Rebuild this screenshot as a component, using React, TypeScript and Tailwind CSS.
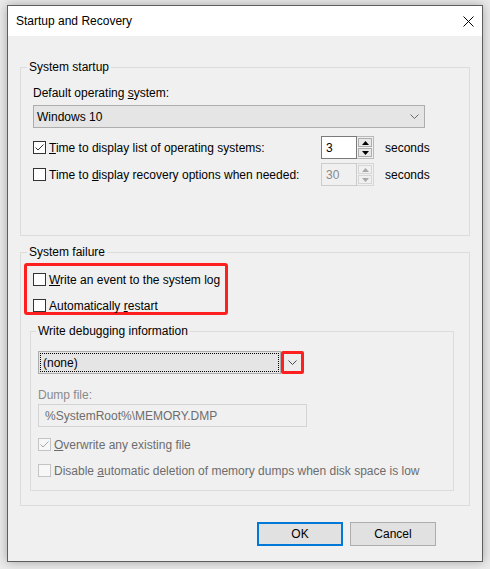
import React from "react";

const font = { fontFamily: '"Liberation Sans", Arial, sans-serif' };

function CheckBox({ checked = false, disabled = false }: { checked?: boolean; disabled?: boolean }) {
  return (
    <span
      className={`flex h-[13px] w-[13px] shrink-0 items-center justify-center border ${
        disabled ? "border-[#c4c4c4] bg-[#f7f7f7]" : "border-[#333333] bg-white"
      }`}
    >
      {checked && (
        <svg width="11" height="11" viewBox="0 0 11 11">
          <path d="M1.5 5.5 L4 8 L9.5 2.5" fill="none" stroke={disabled ? "#a8a8a8" : "#333333"} strokeWidth="1" />
        </svg>
      )}
    </span>
  );
}

function Chevron({ color = "#5a5a5a" }: { color?: string }) {
  return (
    <svg width="9" height="5" viewBox="0 0 9 5">
      <path d="M0.5 0.5 L4.5 4.5 L8.5 0.5" fill="none" stroke={color} strokeWidth="1" />
    </svg>
  );
}

function Spinner({ value, disabled = false }: { value: string; disabled?: boolean }) {
  const tri = disabled ? "#a8a8a8" : "#000000";
  return (
    <div className="flex h-[23px]">
      <div
        className={`flex w-[36px] items-center border pl-[4px] ${
          disabled ? "border-[#cccccc] bg-[#f0f0f0] text-[#8a8a8a]" : "border-[#7a7a7a] bg-white text-black"
        }`}
      >
        {value}
      </div>
      <div
        className={`flex w-[17px] flex-col gap-[1px] border border-l-0 p-[1px] ${
          disabled ? "border-[#d6d6d6]" : "border-[#b9b9b9]"
        }`}
      >
        <div
          className={`flex flex-1 items-center justify-center border ${
            disabled ? "border-[#d6d6d6] bg-[#f0f0f0]" : "border-[#adadad] bg-[#e8e8e8]"
          }`}
        >
          <svg width="7" height="4" viewBox="0 0 7 4">
            <path d="M0 4 L3.5 0 L7 4 Z" fill={tri} />
          </svg>
        </div>
        <div
          className={`flex flex-1 items-center justify-center border ${
            disabled ? "border-[#d6d6d6] bg-[#f0f0f0]" : "border-[#adadad] bg-[#e8e8e8]"
          }`}
        >
          <svg width="7" height="4" viewBox="0 0 7 4">
            <path d="M0 0 L7 0 L3.5 4 Z" fill={tri} />
          </svg>
        </div>
      </div>
    </div>
  );
}

export default function App() {
  return (
    <div className="h-[569px] w-[490px] bg-[#ebebeb] pl-[7px] pt-[5px] text-[12px] text-black" style={font}>
      <div className="flex h-[557px] w-[476px] flex-col border border-[#5e5e5e] bg-[#f0f0f0] shadow-[0_0_10px_rgba(0,0,0,0.3)]">
        {/* title bar */}
        <div className="flex h-[30px] shrink-0 items-center justify-between bg-white pl-[8px] pr-[8px]">
          <span className="leading-4">Startup and Recovery</span>
          <svg width="11" height="11" viewBox="0 0 11 11">
            <path d="M0.5 0.5 L10.5 10.5 M10.5 0.5 L0.5 10.5" stroke="#000" strokeWidth="1" />
          </svg>
        </div>

        <div className="flex flex-1 flex-col px-[12px] pt-[23px]">
          {/* System startup */}
          <fieldset className="h-[177px] border border-[#dcdcdc] p-0">
            <legend className="ml-[6px] px-[2px] leading-4">System startup</legend>
            <div className="px-[12px]">
              <div className="mt-[10px] leading-4">
                Default operating <span className="underline">s</span>ystem:
              </div>
              <div className="mt-[4px] flex h-[23px] w-[392px] items-center justify-between border border-[#adadad] bg-[#e5e5e5] pl-[3px] pr-[5px]">
                <span>Windows 10</span>
                <Chevron color="#6a6a6a" />
              </div>

              <div className="mt-[8px] flex h-[23px] items-center">
                <div className="flex w-[288px] items-center gap-[3px]">
                  <CheckBox checked />
                  <span>
                    <span className="underline">T</span>ime to display list of operating systems:
                  </span>
                </div>
                <Spinner value="3" />
                <span className="ml-[11px]">seconds</span>
              </div>

              <div className="mt-[4px] flex h-[23px] items-center">
                <div className="flex w-[288px] items-center gap-[3px]">
                  <CheckBox />
                  <span>
                    Time to <span className="underline">d</span>isplay recovery options when needed:
                  </span>
                </div>
                <Spinner value="30" disabled />
                <span className="ml-[11px]">seconds</span>
              </div>
            </div>
          </fieldset>

          {/* System failure */}
          <fieldset className="mt-[8px] h-[262px] border border-[#dcdcdc] p-0">
            <legend className="ml-[6px] px-[2px] leading-4">System failure</legend>
            <div className="pl-[3px]">
              <div className="mt-[3px] flex w-[204px] flex-col gap-[13px] rounded-[3px] border-[3px] border-[#fe1f1f] pl-[6px] pt-[7px]">
                <div className="flex h-[13px] items-center gap-[3px]">
                  <CheckBox />
                  <span>
                    <span className="underline">W</span>rite an event to the system log
                  </span>
                </div>
                <div className="flex h-[13px] items-center gap-[3px]">
                  <CheckBox />
                  <span>
                    Automatically <span className="underline">r</span>estart
                  </span>
                </div>
              </div>

              <fieldset className="ml-[6px] mt-[8px] h-[168px] w-[424px] border border-[#dcdcdc] p-0">
                <legend className="ml-[5px] px-[2px] leading-4">Write debugging information</legend>
                <div className="pl-[7px]">
                  <div className="mt-[12px] flex h-[23px]">
                    <div className="w-[243px] border border-[#adadad] bg-[#e5e5e5] p-[1px]">
                      <div className="flex h-full items-center border border-dotted border-black pl-[2px]">
                        (none)
                      </div>
                    </div>
                    <div className="flex w-[23px] items-center justify-center rounded-[2px] border-[3px] border-[#fe1f1f] bg-[#ececec]">
                      <Chevron color="#4a4a4a" />
                    </div>
                  </div>

                  <div className="mt-[13px] h-[16px] leading-4 text-[#8a8a8a]">Dump file:</div>
                  <div className="mt-[1px] flex h-[23px] w-[269px] items-center border border-[#d4d4d4] bg-[#f0f0f0] pl-[6px] text-[#6d6d6d]">
                    %SystemRoot%\MEMORY.DMP
                  </div>

                  <div className="mt-[11px] flex h-[13px] items-center gap-[3px] text-[#6d6d6d]">
                    <CheckBox checked disabled />
                    <span>
                      <span className="underline">O</span>verwrite any existing file
                    </span>
                  </div>
                  <div className="mt-[13px] flex h-[13px] items-center gap-[3px] text-[#6d6d6d]">
                    <CheckBox disabled />
                    <span>
                      Disable <span className="underline">a</span>utomatic deletion of memory dumps when disk space is low
                    </span>
                  </div>
                </div>
              </fieldset>
            </div>
          </fieldset>

          {/* buttons */}
          <div className="mr-[34px] mt-[16px] flex justify-end gap-[7px]">
            <button className="h-[24px] w-[86px] border-2 border-[#0078d7] bg-[#e1e1e1]">OK</button>
            <button className="h-[24px] w-[86px] border border-[#adadad] bg-[#e1e1e1]">Cancel</button>
          </div>
        </div>
      </div>
    </div>
  );
}
